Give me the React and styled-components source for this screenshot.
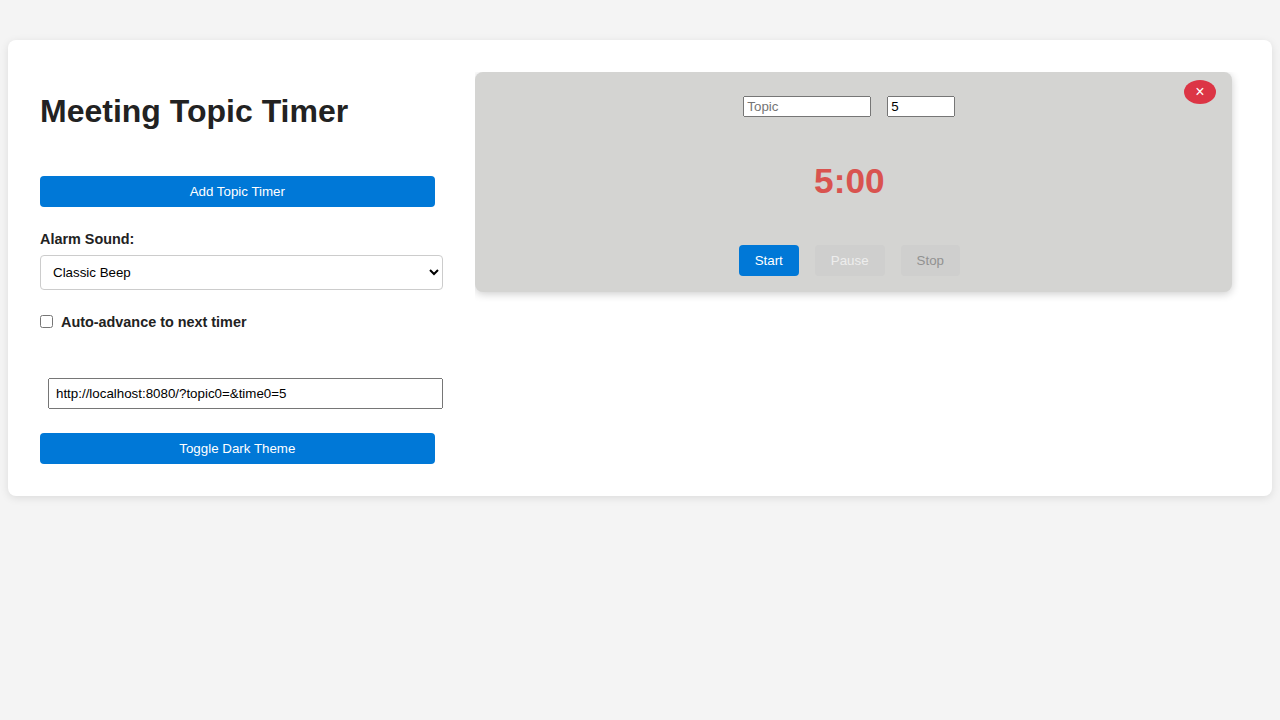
import React, { useState } from "react";
import styled, { createGlobalStyle } from "styled-components";

const GlobalStyle = createGlobalStyle`
  body {
    margin: 0;
    padding: 40px 8px;
    background: #f4f4f4;
    color: #222;
    font-family: "Liberation Sans", Arial, sans-serif;
  }
`;

const Container = styled.main`
  display: flex;
  gap: 32px;
  box-sizing: border-box;
  height: 456px;
  padding: 32px 40px 32px 32px;
  background: #fff;
  border-radius: 8px;
  box-shadow: 0 2px 8px rgba(0, 0, 0, 0.1);
`;

const Sidebar = styled.section`
  display: flex;
  flex-direction: column;
  flex: 0 0 402.67px;
`;

const Title = styled.h1`
  margin: 21px 0 0;
  font-size: 32px;
  line-height: 37px;
`;

const Button = styled.button`
  height: 31px;
  padding: 8px 16px;
  border: none;
  border-radius: 4px;
  background: #0078d7;
  color: #fff;
  font: 13.333px "Liberation Sans", Arial, sans-serif;
`;

const WideButton = styled(Button)`
  margin: ${(p) => p.$top}px 8px 0 0;
`;

const Label = styled.label`
  margin-top: 24px;
  font-size: 14.4px;
  font-weight: bold;
  line-height: 16px;
`;

const Select = styled.select`
  box-sizing: border-box;
  height: 35px;
  margin-top: 8px;
  padding: 8px;
  border: 1px solid #ccc;
  border-radius: 4px;
  background: #fff;
  color: #000;
  font: 13.333px "Liberation Sans", Arial, sans-serif;
`;

const CheckLabel = styled.label`
  display: flex;
  align-items: center;
  gap: 8px;
  height: 16px;
  margin-top: 24px;
  font-size: 14.4px;
  font-weight: bold;
`;

const Checkbox = styled.input`
  width: 13px;
  height: 13px;
  margin: 0 0 2px;
`;

const UrlInput = styled.input`
  box-sizing: border-box;
  height: 31px;
  margin: 48px 0 0 8px;
  padding: 6px;
  font: 13.333px "Liberation Sans", Arial, sans-serif;
`;

const TimerList = styled.section`
  flex: 1;
  overflow-x: hidden;
  margin-right: -8px;
  padding-right: 8px;
`;

const TimerCard = styled.article`
  position: relative;
  display: flex;
  flex-direction: column;
  align-items: center;
  box-sizing: border-box;
  height: 220px;
  padding: 24px 24px 16px 16px;
  border-radius: 8px;
  background: #d4d4d2;
  box-shadow: 0 2px 8px rgba(0, 0, 0, 0.2);
`;

const Row = styled.div`
  display: flex;
  gap: 16px;
`;

const Field = styled.input`
  box-sizing: border-box;
  width: ${(p) => p.$width}px;
  height: 21px;
  margin: 0;
  font: 13.333px "Liberation Sans", Arial, sans-serif;
`;

const Time = styled.div`
  margin: 44px 0;
  color: #d9534f;
  font-size: 35.2px;
  font-weight: bold;
  line-height: 40px;
`;

const CloseButton = styled.button`
  position: absolute;
  top: 8px;
  right: 16px;
  width: 32px;
  height: 24px;
  padding: 0;
  border: none;
  border-radius: 50%;
  background: #dc3545;
  color: #fff;
  font: 16px "Liberation Sans", Arial, sans-serif;
`;

const DisabledButton = styled(Button)`
  background: #ccc;
  color: ${(p) => p.$ink};
  opacity: 0.6;
`;

export default function App() {
  const [topic, setTopic] = useState("");
  const [minutes, setMinutes] = useState("5");
  return (
    <>
      <GlobalStyle />
      <Container>
        <Sidebar>
          <Title>Meeting Topic Timer</Title>
          <WideButton $top={46}>Add Topic Timer</WideButton>
          <Label htmlFor="alarm">Alarm Sound:</Label>
          <Select id="alarm">
            <option>Classic Beep</option>
          </Select>
          <CheckLabel>
            <Checkbox type="checkbox" />
            Auto-advance to next timer
          </CheckLabel>
          <UrlInput readOnly value={`http://localhost:8080/?topic0=${topic}&time0=${minutes}`} />
          <WideButton $top={24}>Toggle Dark Theme</WideButton>
        </Sidebar>
        <TimerList>
          <TimerCard>
            <CloseButton aria-label="Remove timer">×</CloseButton>
            <Row>
              <Field $width={128} placeholder="Topic" value={topic} onChange={(e) => setTopic(e.target.value)} />
              <Field $width={68} type="number" value={minutes} onChange={(e) => setMinutes(e.target.value)} />
            </Row>
            <Time>5:00</Time>
            <Row>
              <Button>Start</Button>
              <DisabledButton disabled $ink="#fff">Pause</DisabledButton>
              <DisabledButton disabled $ink="#666">Stop</DisabledButton>
            </Row>
          </TimerCard>
        </TimerList>
      </Container>
    </>
  );
}
